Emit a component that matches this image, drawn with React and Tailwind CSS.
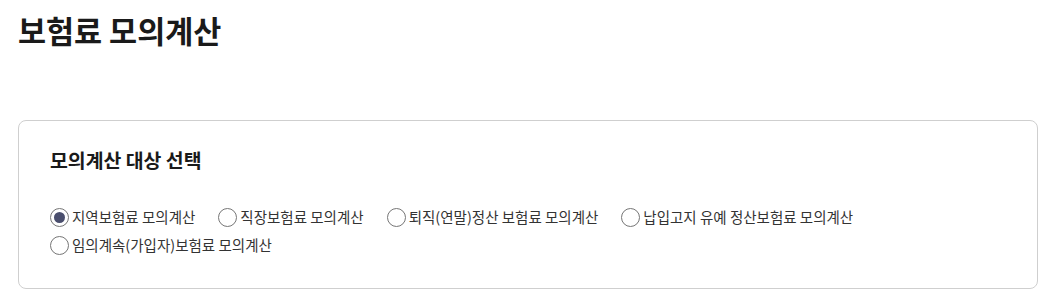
import React, { useState } from 'react';

const options = [
    { id: 'region', label: '지역보험료 모의계산' },
    { id: 'work', label: '직장보험료 모의계산' },
    { id: 'retire', label: '퇴직(연말)정산 보험료 모의계산' },
    { id: 'defer', label: '납입고지 유예 정산보험료 모의계산' },
    { id: 'voluntary', label: '임의계속(가입자)보험료 모의계산' },
];

const App = () => {
    const [selected, setSelected] = useState('region')

    return (
        <div className="px-[18px] bg-white text-[#222]" style={{ fontFamily: '"Noto Sans CJK KR", "Noto Sans", sans-serif' }}>
            <h1 className="pt-[10px] text-[30.5px] leading-[40px] font-bold text-[#1a1a1a]">보험료 모의계산</h1>

            <div className="mt-[70px] border border-[#cfcfcf] rounded-lg px-[31px] pt-[27px] pb-[29px]">
                <h2 className="text-[19.4px] leading-[24px] font-bold text-[#1a1a1a]">모의계산 대상 선택</h2>
                <div className="mt-[31px] flex flex-wrap gap-x-[23px]">
                    {
                        options.map(opt => <label key={opt.id} onClick={() => setSelected(opt.id)} className="flex items-center h-[28px] cursor-pointer">
                            <span className="w-[19px] h-[19px] rounded-full border border-[#767676] bg-white flex items-center justify-center shrink-0">
                                {selected === opt.id && <span className="w-[11px] h-[11px] rounded-full bg-[#4a4e6d]"></span>}
                            </span>
                            <span className="ml-[3px] text-[14.5px] text-[#333]">{opt.label}</span>
                        </label>)
                    }
                </div>
            </div>
        </div>
    );
};

export default App;
